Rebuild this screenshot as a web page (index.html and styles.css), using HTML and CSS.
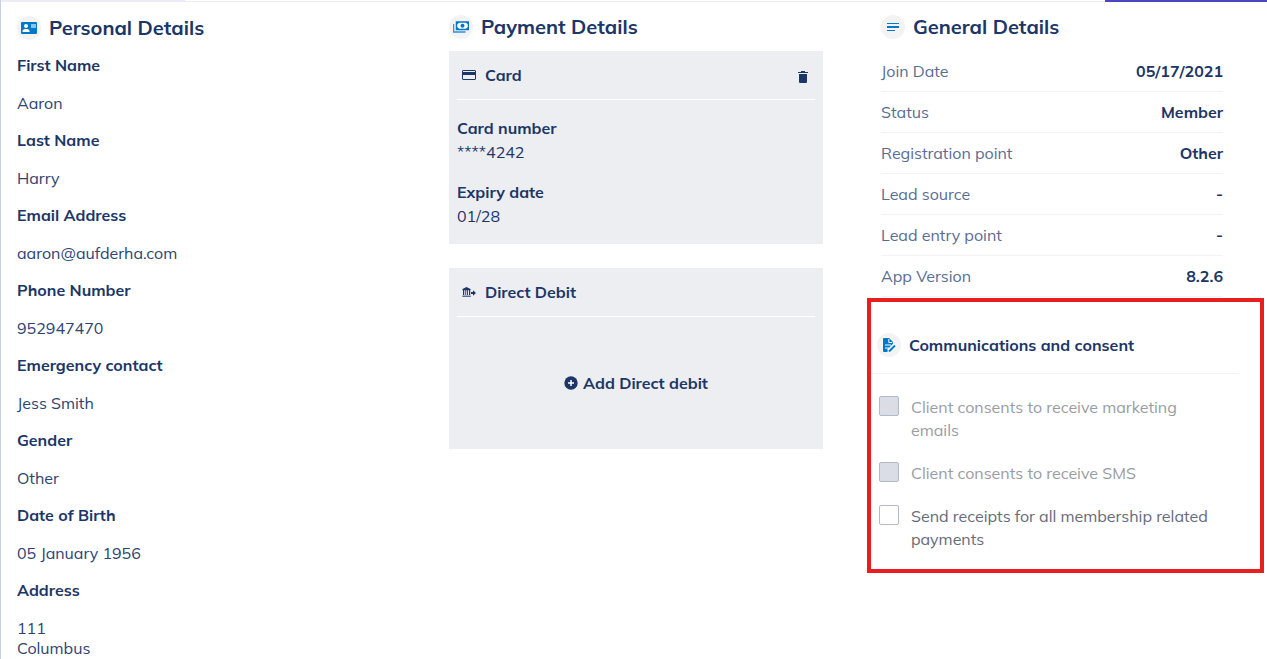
FILE: index.html
```html
<!DOCTYPE html>
<html lang="en">
<head>
    <meta charset="utf-8">
    <meta name="viewport" content="width=device-width, initial-scale=1">
    <title>Client profile</title>
    <link rel="stylesheet" href="styles.css">
</head>
<body>
<div class="tab-strip">
    <span class="tab-edge"></span>
    <span class="tab-edge active"></span>
</div>
<main class="profile">
    <section class="personal">
        <h2 class="title">
            <span class="badge">
                <svg width="16" height="12" viewBox="0 0 16 12"><rect width="16" height="12" rx="1" fill="#0078c8"/><g fill="#fff"><circle cx="5" cy="4" r="2"/><path d="M1.500 10V9C1.500 7.500 3.500 7 5 7s3.500.5 3.500 2v1z"/></g><path d="M10 2h5v4h-5z" fill="#8cc4e8"/></svg>
            </span>
            Personal Details
        </h2>
        <dl class="fields">
            <dt>First Name</dt>
            <dd>Aaron</dd>
            <dt>Last Name</dt>
            <dd>Harry</dd>
            <dt>Email Address</dt>
            <dd>aaron@aufderha.com</dd>
            <dt>Phone Number</dt>
            <dd>952947470</dd>
            <dt>Emergency contact</dt>
            <dd>Jess Smith</dd>
            <dt>Gender</dt>
            <dd>Other</dd>
            <dt>Date of Birth</dt>
            <dd>05 January 1956</dd>
            <dt>Address</dt>
            <dd>111<br>Columbus</dd>
        </dl>
    </section>

    <section class="payment">
        <h2 class="title">
            <span class="badge">
                <svg width="16" height="12" viewBox="0 0 16 12"><path d="M.5 3v8H12.500" fill="none" stroke="#2a93d8" stroke-width="1.500"/><rect x="3.500" y="1" width="12" height="7.500" fill="#fff" stroke="#0078c8" stroke-width="1.500"/><path d="M4 1h3L4 3.500zM15 1v2.500L12 1zM4 8.500V6l3 2.500zM15 8.500h-3L15 6z" fill="#0078c8"/><circle cx="9.500" cy="4.800" r="2" fill="#0078c8"/></svg>
            </span>
            Payment Details
        </h2>
        <div class="card">
            <div class="card-head">
                <svg width="14" height="10" viewBox="0 0 14 10"><rect x=".5" y=".5" width="13" height="9" rx=".5" fill="none" stroke="currentColor"/><path d="M0 2h14v3H0z" fill="currentColor"/></svg>
                <h3>Card</h3>
                <button class="icon-button" type="button" aria-label="Delete card">
                    <svg width="10" height="12" viewBox="0 0 10 12" fill="currentColor"><path d="M3 0h4v1h3v1H0V1h3zM1 3h8v8q0 1-1 1H2q-1 0-1-1z"/></svg>
                </button>
            </div>
            <dl class="card-body">
                <dt>Card number</dt>
                <dd>****4242</dd>
                <dt>Expiry date</dt>
                <dd>01/28</dd>
            </dl>
        </div>
        <div class="card">
            <div class="card-head">
                <svg width="14" height="10" viewBox="0 0 14 10" fill="currentColor"><path d="M4.500 0L8.500 2v1.300H.5V2zM1 3h1.200v5H1zM3.300 3h.9v5h-.9zM5 3h.9v5H5zM7 3h1.200v5H7z"/><path d="M.3 8.500h8.500V10H.3z" opacity=".7"/><path d="M9 5h2V3.200L14 6l-3 2.800V7H9z"/></svg>
                <h3>Direct Debit</h3>
            </div>
            <div class="card-empty">
                <button class="add-button" type="button">
                    <svg width="14" height="14" viewBox="0 0 14 14"><circle cx="7" cy="7" r="6.700" fill="currentColor"/><path d="M7 4v6M4 7h6" stroke="#fff" stroke-width="1.500"/></svg>
                    Add Direct debit
                </button>
            </div>
        </div>
    </section>

    <section class="general">
        <h2 class="title">
            <span class="badge">
                <svg width="12" height="8" viewBox="0 0 12 8" fill="#0078c8"><path d="M0 0h12v1H0zM0 3h12v2H0zM0 7h8v1H0z"/></svg>
            </span>
            General Details
        </h2>
        <dl class="summary">
            <div><dt>Join Date</dt><dd>05/17/2021</dd></div>
            <div><dt>Status</dt><dd>Member</dd></div>
            <div><dt>Registration point</dt><dd>Other</dd></div>
            <div><dt>Lead source</dt><dd>-</dd></div>
            <div><dt>Lead entry point</dt><dd>-</dd></div>
            <div><dt>App Version</dt><dd>8.2.6</dd></div>
        </dl>
        <div class="consent">
            <h3 class="consent-title">
                <span class="badge">
                    <svg width="14" height="14" viewBox="0 0 14 14"><path d="M1 1q0-1 1-1h5l4 4v3.500L5.500 13v1H2q-1 0-1-1z" fill="#0078c8"/><path d="M6.800 1v3.500h3.500M3 7h6M3 10h4" fill="none" stroke="#fff"/><path d="M6.500 13.200l6-6" stroke="#fff" stroke-width="4"/><path d="M7 13.500l6-6" stroke="#0078c8" stroke-width="2"/></svg>
                </span>
                Communications and consent
            </h3>
            <div class="options">
                <label class="option disabled"><input type="checkbox" disabled><span>Client consents to receive marketing emails</span></label>
                <label class="option disabled"><input type="checkbox" disabled><span>Client consents to receive SMS</span></label>
                <label class="option"><input type="checkbox"><span>Send receipts for all membership related payments</span></label>
            </div>
        </div>
    </section>
</main>
</body>
</html>
```
FILE: styles.css
```css
* {
    box-sizing: border-box;
}

body {
    margin: 0;
    border-left: 1px solid #ccd0e0;
    background: #fff;
    color: #1b3667;
    font-family: Mulish, Lato, "Liberation Sans", sans-serif;
    font-size: 16px;
    line-height: 24px;
}

h2, h3, dl, dd {
    margin: 0;
}

dt, h3 {
    font-size: 16px;
    font-weight: 700;
}

svg {
    flex: none;
}

button {
    border: 0;
    padding: 0;
    background: none;
    color: inherit;
    font: inherit;
    cursor: pointer;
}

/* bottom edge of the tabs above */
.tab-strip {
    display: flex;
    justify-content: space-between;
    height: 2px;
    background: linear-gradient(#fff 50%, #ededf0 50%);
}

.tab-edge {
    width: 184px;
    background: #ececf8;
}

.tab-edge.active {
    width: 162px;
    background: #4b45c0;
}

.profile {
    display: grid;
    grid-template-columns: 374fr 374fr 386fr;
    gap: 58px;
    min-height: calc(100vh - 2px);
    padding-left: 16px;
}

.title {
    display: flex;
    align-items: center;
    gap: 8px;
    height: 49px;
    font-size: 20px;
    font-weight: 700;
}

.badge {
    display: flex;
    flex: none;
    align-items: center;
    justify-content: center;
    width: 24px;
    height: 24px;
    border-radius: 50%;
    background: #f3f3f5;
}

.personal .title {
    height: 44px;
    padding-top: 7px;
}

/* personal */
.fields dt {
    padding: 9px 0;
    line-height: 20px;
}

.fields dd {
    padding: 9px 0 8px;
    line-height: 20px;
    color: #2b4472;
}

.fields dd:last-child {
    padding-bottom: 0;
}

/* payment */
.card {
    padding: 0 8px;
    background: #edeef2;
}

.card + .card {
    margin-top: 24px;
}

.card-head {
    display: flex;
    align-items: center;
    gap: 9px;
    height: 49px;
    padding: 0 7px 0 5px;
    border-bottom: 1px solid #fff;
}

.icon-button {
    display: flex;
    margin-left: auto;
    padding-top: 4px;
}

.card-body {
    padding: 16px 0;
}

.card-body dd + dt {
    margin-top: 16px;
}

.card-empty {
    display: flex;
    align-items: center;
    justify-content: center;
    height: 132px;
}

.add-button {
    display: flex;
    align-items: center;
    gap: 5px;
    font-weight: 700;
}

/* general */
.summary {
    padding-right: 44px;
}

.summary div {
    display: flex;
    align-items: center;
    justify-content: space-between;
    height: 41px;
    border-bottom: 1px solid #f3f3f5;
}

.summary dt {
    color: #596d94;
    font-weight: 400;
}

.summary dd {
    font-weight: 700;
}

.consent {
    margin: 1px 3px 0 -14px;
    padding: 0 21px 18px 0;
    border: 4px solid #e91e1e;
}

.consent-title {
    display: flex;
    align-items: center;
    gap: 8px;
    height: 72px;
    padding: 14px 0 0 6px;
    border-bottom: 1px solid #f3f3f5;
}

.options {
    display: grid;
    gap: 20px;
    padding: 22px 16px 0 8px;
}

.option {
    display: flex;
    gap: 12px;
    line-height: 23px;
    color: #656b78;
}

.option.disabled {
    color: #999ca4;
}

.option input {
    appearance: none;
    flex: none;
    width: 20px;
    height: 20px;
    margin: 0;
    border: 1px solid #b3b9cc;
    border-radius: 2px;
    background: #fff;
}

.option input:disabled {
    background: #dadde6;
}
```
